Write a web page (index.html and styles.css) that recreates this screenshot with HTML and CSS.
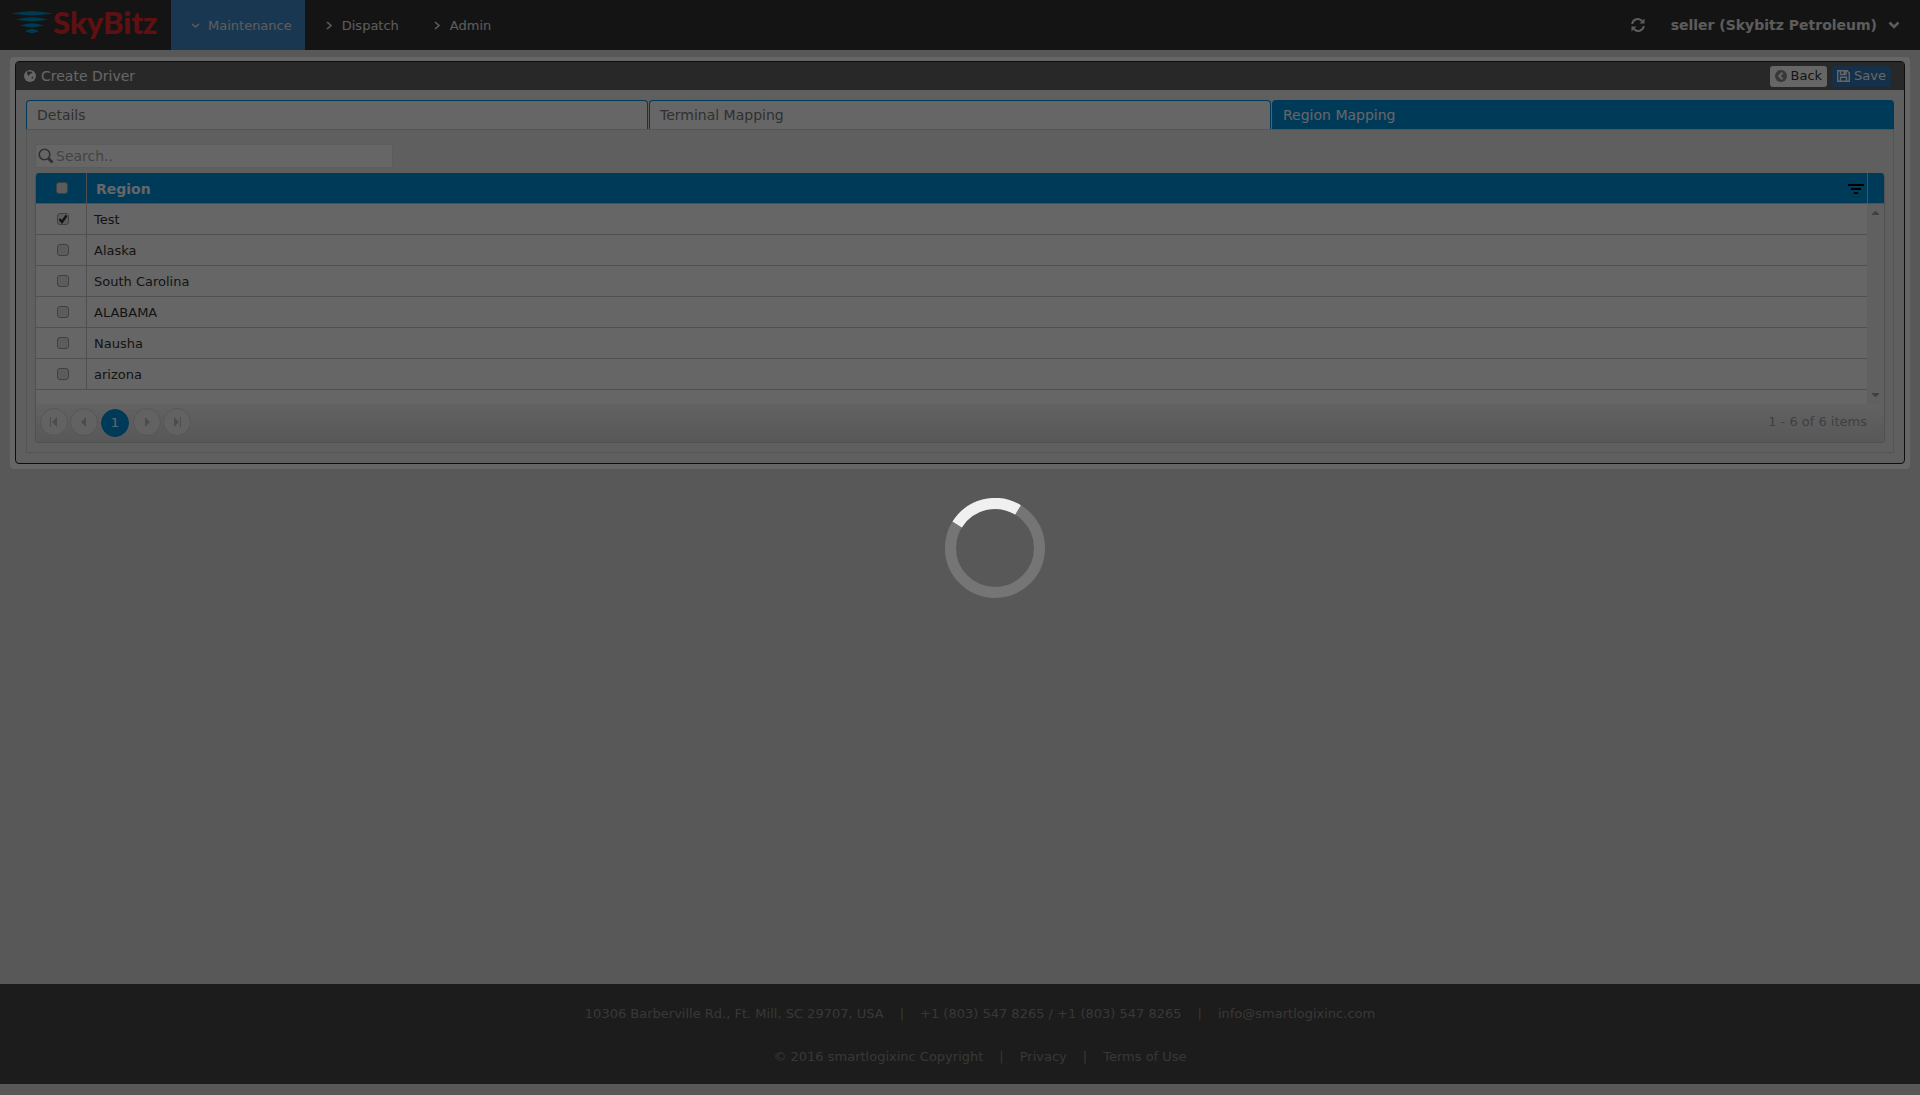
FILE: index.html
```html
<!DOCTYPE html>
<html lang="en">
<head>
<meta charset="utf-8">
<title>Create Driver</title>
<link rel="stylesheet" href="styles.css">
</head>
<body>
<header class="topbar">
  <a class="logo" href="#">
    <svg class="logo-mark" width="42" height="24" viewBox="0 0 42 24" aria-hidden="true">
      <path d="M0 2.500Q10 0.500 21 0Q32 0.500 42 2.500Q32 4 21 4.500Q10 4 0 2.500ZM5 8.500Q13 6.800 21 6.300Q29 6.800 37 8.500Q29 10 21 10.500Q13 10 5 8.500ZM9 14.500Q15 12.800 21 12.300Q27 12.800 33 14.500Q27 16 21 16.500Q15 16 9 14.500ZM14 20Q18 18.200 21 17.700Q24 18.200 28 20Q24 21.800 21 22.300Q18 21.800 14 20Z"/>
    </svg>
    <span class="logo-text">SkyBitz</span>
  </a>
  <nav class="nav">
    <a class="nav-link active" href="#"><svg class="nav-arrow" width="9" height="9" viewBox="0 0 9 9"><path d="M1 3L4.500 6L8 3"/></svg>Maintenance</a>
    <a class="nav-link" href="#"><svg class="nav-arrow" width="9" height="9" viewBox="0 0 9 9"><path d="M2 1L6 4.500L2 8"/></svg>Dispatch</a>
    <a class="nav-link" href="#"><svg class="nav-arrow" width="9" height="9" viewBox="0 0 9 9"><path d="M2 1L6 4.500L2 8"/></svg>Admin</a>
  </nav>
  <div class="account">
    <button class="icon-button" type="button" aria-label="Refresh">
      <svg width="14" height="14" viewBox="0 0 14 14"><path class="line" d="M1.200 6A5.600 5.600 0 0 1 11 3M12.800 8A5.600 5.600 0 0 1 3 11"/><path class="solid" d="M13.500 0.500V5.500H8.500ZM0.500 13.500V8.500H5.500Z"/></svg>
    </button>
    <button class="user-button" type="button">seller (Skybitz Petroleum)
      <svg width="12" height="8" viewBox="0 0 12 8"><path class="caret" d="M1.500 1.500L6 6L10.500 1.500"/></svg>
    </button>
  </div>
</header>

<main class="page">
  <div class="frame">
    <section class="panel">
      <div class="panel-head">
        <h1 class="panel-title">
          <svg width="12" height="12" viewBox="0 0 12 12"><circle class="globe" cx="6" cy="6" r="6"/><path class="land" d="M3 1.800L5 1.200L6 2L7.500 1.500L8.500 2.500L7 3.500L5.500 4.500L4.500 6L3.500 4.500ZM8 6.500L9.500 7L8.500 8.500L7.500 9Z"/></svg>
          Create Driver
        </h1>
        <div class="actions">
          <button class="button back" type="button"><svg width="12" height="12" viewBox="0 0 12 12"><circle class="back-disc" cx="6" cy="6" r="6"/><path class="back-arrow" d="M7.500 2.700L4.200 6L7.500 9.300"/></svg>Back</button>
          <button class="button save" type="button"><svg width="13" height="12" viewBox="0 0 13 12"><path class="disk" d="M0.700 0.700H10L12.300 3V11.300H0.700ZM3.500 0.700V4.500H9V0.700M3.500 11V7.300H9.500V11"/><path class="disk-tab" d="M6.500 1H8.500V4H6.500Z"/></svg>Save</button>
        </div>
      </div>
      <div class="panel-body">
        <div class="tabs" role="tablist">
          <button class="tab" role="tab" type="button">Details</button>
          <button class="tab" role="tab" type="button">Terminal Mapping</button>
          <button class="tab selected" role="tab" type="button" aria-selected="true">Region Mapping</button>
        </div>
        <div class="tab-content">
          <label class="search">
            <svg width="16" height="16" viewBox="0 0 16 16"><circle cx="6.500" cy="6.500" r="5.300"/><path class="handle" d="M10.500 10.500L14.500 14.500"/></svg>
            <input type="text" placeholder="Search.." aria-label="Search">
          </label>
          <div class="grid">
            <div class="grid-scroll">
              <table class="table">
                <thead>
                  <tr>
                    <th class="check"><input type="checkbox" aria-label="Select all regions"></th>
                    <th><div class="th-inner">Region<button class="filter" type="button" aria-label="Filter regions"><svg width="16" height="10" viewBox="0 0 16 10"><path d="M0 0H16V2H0ZM3 4H13V6H3ZM6 8H10V10H6Z"/></svg></button></div></th>
                  </tr>
                </thead>
                <tbody>
                  <tr><td class="check"><input type="checkbox" id="r1" checked></td><td><label for="r1">Test</label></td></tr>
                  <tr><td class="check"><input type="checkbox" id="r2"></td><td><label for="r2">Alaska</label></td></tr>
                  <tr><td class="check"><input type="checkbox" id="r3"></td><td><label for="r3">South Carolina</label></td></tr>
                  <tr><td class="check"><input type="checkbox" id="r4"></td><td><label for="r4">ALABAMA</label></td></tr>
                  <tr><td class="check"><input type="checkbox" id="r5"></td><td><label for="r5">Nausha</label></td></tr>
                  <tr><td class="check"><input type="checkbox" id="r6"></td><td><label for="r6">arizona</label></td></tr>
                </tbody>
              </table>
              <div class="rail">
                <div class="rail-head"></div>
                <div class="rail-track">
                  <svg width="7" height="4" viewBox="0 0 7 4"><path d="M3 0H4L7 3V4H0V3Z"/></svg>
                  <svg width="7" height="4" viewBox="0 0 7 4"><path d="M0 0H7V1L4 4H3L0 1Z"/></svg>
                </div>
              </div>
            </div>
            <div class="pager">
              <div class="pages">
                <button class="page-button" type="button" aria-label="First page"><svg width="10" height="10" viewBox="0 0 10 10"><path d="M1 0H2V10H1ZM8 0V10L3 5Z"/></svg></button>
                <button class="page-button" type="button" aria-label="Previous page"><svg width="10" height="10" viewBox="0 0 10 10"><path d="M7 0V10L2 5Z"/></svg></button>
                <button class="page-button current" type="button">1</button>
                <button class="page-button" type="button" aria-label="Next page"><svg width="10" height="10" viewBox="0 0 10 10"><path d="M3 0V10L8 5Z"/></svg></button>
                <button class="page-button" type="button" aria-label="Last page"><svg width="10" height="10" viewBox="0 0 10 10"><path d="M2 0V10L7 5ZM8 0H9V10H8Z"/></svg></button>
              </div>
              <span class="count">1 - 6 of 6 items</span>
            </div>
          </div>
        </div>
      </div>
    </section>
  </div>
</main>

<footer class="footer">
  <ul class="footer-row">
    <li>10306 Barberville Rd., Ft. Mill, SC 29707, USA</li>
    <li>|</li>
    <li>+1 (803) 547 8265 / +1 (803) 547 8265</li>
    <li>|</li>
    <li><a href="#">info@smartlogixinc.com</a></li>
  </ul>
  <ul class="footer-row">
    <li>© 2016 smartlogixinc Copyright</li>
    <li>|</li>
    <li><a href="#">Privacy</a></li>
    <li>|</li>
    <li><a href="#">Terms of Use</a></li>
  </ul>
</footer>

<div class="overlay" role="status" aria-label="Loading">
  <svg width="100" height="100" viewBox="0 0 100 100"><circle class="ring" cx="50" cy="50" r="44.500"/><path class="arc" d="M12.200 26.500A44.500 44.500 0 0 1 73 11.900"/></svg>
</div>
</body>
</html>
```
FILE: styles.css
```css
* { box-sizing: border-box; }

body {
  margin: 0;
  min-height: 100vh;
  display: flex;
  flex-direction: column;
  background: #dcdcdc;
  color: #333;
  font: 13px/18px Verdana, "DejaVu Sans", sans-serif;
}

a { color: inherit; text-decoration: none; }
button, input { font: inherit; color: inherit; margin: 0; }
button { border: 0; background: none; padding: 0; }
svg { fill: none; flex: none; }

/* Top bar */
.topbar { display: flex; height: 50px; background: #323232; color: #e6e6e6; }
.logo { display: flex; width: 171px; padding-left: 11px; }
.logo-mark { margin-top: 11px; fill: #0091c8; }
.logo-text { font: 900 31px/44px Lato, sans-serif; color: #ee2a30; }
.nav { display: flex; }
.nav-link { display: flex; align-items: center; gap: 8px; padding: 1px 14px 0 20px; }
.nav-link.active { padding-right: 13px; background: #428bca; }
.nav-arrow { stroke: #e6e6e6; stroke-width: 1.6; }
.account { display: flex; align-items: center; gap: 26px; margin-left: auto; padding-right: 20px; }
.icon-button { display: flex; }
.icon-button .line { stroke: #e6e6e6; stroke-width: 2; }
.icon-button .solid { fill: #e6e6e6; }
.user-button { display: flex; align-items: center; gap: 11px; font-size: 14px; font-weight: bold; }
.caret { stroke: #e6e6e6; stroke-width: 2.6; }

/* Panel */
.page { flex: 1; padding: 7px 10px; }
.frame { padding: 4px 5px 5px; background: #fff; border-radius: 4px; }
.panel { border: 1px solid #222; border-radius: 4px; background: #eee; }
.panel-head {
  display: flex;
  align-items: center;
  justify-content: space-between;
  height: 28px;
  padding: 0 13px 0 8px;
  background: #646464;
  color: #fff;
}
.panel-title { display: flex; align-items: center; gap: 5px; margin: 0; font-size: 14px; font-weight: normal; }
.globe { fill: #fff; }
.land { fill: #646464; }
.actions { display: flex; gap: 5px; }
.button { display: flex; align-items: center; gap: 4px; height: 21px; padding: 0 5px; border-radius: 3px; }
.back { background: #fff; color: #333; }
.save { background: #337ab7; color: #fff; }
.back-disc { fill: #8c8c8c; }
.back-arrow { stroke: #fff; stroke-width: 2; }
.disk { stroke: #fff; stroke-width: 1.4; }
.disk-tab { fill: #fff; }
.panel-body { padding: 10px; }

.tabs { display: flex; gap: 1px; }
.tab {
  flex: 1;
  height: 29px;
  padding: 0 10px;
  border: 1px solid #0091df;
  border-bottom: 0;
  border-radius: 4px 4px 0 0;
  background: #fff;
  color: #787878;
  font-size: 14px;
  text-align: left;
}
.tab.selected { background: #0091df; color: #fff; }
.tab-content { padding: 14px 8px 9px; border: 1px solid #d2d2d2; }

.search {
  display: flex;
  align-items: center;
  gap: 2px;
  width: 358px;
  height: 24px;
  padding-left: 2px;
  border: 1px solid #e6e6e6;
  border-radius: 2px;
  background: #fff;
}
.search svg { stroke: #787878; stroke-width: 1.6; }
.search .handle { stroke-width: 3; }
.search input { flex: 1; min-width: 0; border: 0; padding: 0; background: none; font-size: 14px; outline: 0; }
.search input::placeholder { color: #aaa; opacity: 1; }

/* Grid */
.grid { margin-top: 5px; border: 1px solid #c8c8c8; border-top: 0; border-radius: 4px; overflow: hidden; }
.grid-scroll { display: flex; height: 231px; background: #fff; }
.table { flex: 1; align-self: flex-start; border-collapse: separate; border-spacing: 0; table-layout: fixed; }
.table th, .table td { height: 31px; padding: 1px 7px 0; border-bottom: 1px solid #c8c8c8; text-align: left; }
.table th { background: #0091df; color: #fff; font-size: 14px; padding: 1px 3px 0 9px; }
.table .check { width: 51px; padding: 0; border-right: 1px solid #c8c8c8; text-align: center; }
.table input {
  appearance: none;
  display: block;
  width: 12px;
  height: 12px;
  margin: 0 0 0 21px;
  border: 1px solid #a0a0a0;
  border-radius: 3px;
  background: #e6e6e6;
}
.table th input { margin-left: 20px; }
.table input:checked {
  background: #e6e6e6 url("data:image/svg+xml,%3Csvg xmlns='http://www.w3.org/2000/svg' viewBox='0 0 10 10'%3E%3Cpath d='M1.5 5L4 8L8.500 1.500' fill='none' stroke='%23323232' stroke-width='2.400'/%3E%3C/svg%3E");
}
.th-inner { display: flex; align-items: center; justify-content: space-between; }
.filter { display: flex; }
.filter svg { fill: #000; }
.rail { display: flex; flex-direction: column; width: 17px; }
.rail-head { height: 31px; border-left: 1px solid #c8c8c8; border-bottom: 1px solid #c8c8c8; background: #0091df; }
.rail-track {
  flex: 1;
  display: flex;
  flex-direction: column;
  align-items: center;
  justify-content: space-between;
  padding: 7px 0;
  background: #f0f0f0;
}
.rail-track svg { fill: #a0a0a0; }
.pager {
  display: flex;
  align-items: center;
  justify-content: space-between;
  height: 38px;
  padding: 0 17px 2px 4px;
  background: linear-gradient(#f5f5f5, #dcdcdc);
}
.pages { display: flex; align-items: center; gap: 2px; }
.page-button {
  display: flex;
  align-items: center;
  justify-content: center;
  width: 28px;
  height: 28px;
  border: 1px solid #d7d7d7;
  border-radius: 50%;
  background: #f5f5f5;
}
.page-button svg { fill: #bebebe; }
.page-button.current { margin: 1px 2px 0 1px; border-color: #0091df; background: #0091df; color: #fff; }
.count { color: #a0a0a0; }

/* Footer */
.footer { height: 100px; margin-bottom: 11px; padding-top: 9px; background: #464646; color: #8c8c8c; }
.footer-row {
  display: flex;
  justify-content: center;
  gap: 16px;
  margin: 0;
  padding: 12px 0 13px 40px;
  list-style: none;
}

/* Loading overlay */
.overlay {
  position: fixed;
  inset: 0;
  display: flex;
  align-items: center;
  justify-content: center;
  padding-left: 70px;
  background: rgba(0, 0, 0, 0.6);
}
.ring { stroke: #757575; stroke-width: 11; }
.arc { stroke: #f0f0f0; stroke-width: 11; }
```
